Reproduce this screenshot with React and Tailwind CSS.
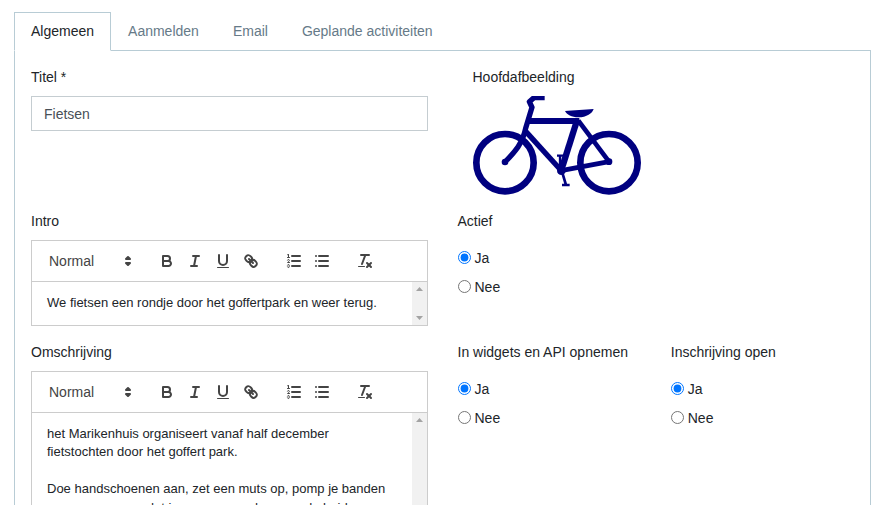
import React from "react";

const st = { stroke: "#444", strokeWidth: 2, strokeLinecap: "round", strokeLinejoin: "round", fill: "none" };
const thin = { ...st, strokeWidth: 1 };

const Btn = ({ children }) => (
  <div className="w-7 h-6 px-[5px] py-[3px]">
    <svg viewBox="0 0 18 18" className="block w-[18px] h-[18px]">{children}</svg>
  </div>
);

const Toolbar = () => (
  <div className="flex p-2 border-b border-[#ccc] h-[41px]">
    <div className="relative w-[98px] h-6 mr-[15px] pl-[9px] text-sm leading-6 text-[#444]">
      Normal
      <svg viewBox="0 0 18 18" className="absolute right-[1px] top-[3px] w-[18px] h-[18px]">
        <polygon points="7 11 9 13 11 11 7 11" {...st} strokeWidth="2" fill="#444" />
        <polygon points="7 7 9 5 11 7 7 7" {...st} strokeWidth="2" fill="#444" />
      </svg>
    </div>
    <div className="flex mr-[15px]">
      <Btn>
        <path d="M5,4H9.5A2.5,2.5,0,0,1,12,6.5v0A2.5,2.5,0,0,1,9.5,9H5A0,0,0,0,1,5,9V4A0,0,0,0,1,5,4Z" {...st} />
        <path d="M5,9h5.5A2.5,2.5,0,0,1,13,11.5v0A2.5,2.5,0,0,1,10.5,14H5a0,0,0,0,1,0,0V9A0,0,0,0,1,5,9Z" {...st} />
      </Btn>
      <Btn>
        <line x1="7" x2="13" y1="4" y2="4" {...st} />
        <line x1="5" x2="11" y1="14" y2="14" {...st} />
        <line x1="8" x2="10" y1="14" y2="4" {...st} />
      </Btn>
      <Btn>
        <path d="M5,3V9a4.012,4.012,0,0,0,4,4H9a4.012,4.012,0,0,0,4-4V3" {...st} />
        <rect x="3" y="15" width="12" height="1" rx="0.5" ry="0.5" fill="#444" />
      </Btn>
      <Btn>
        <line x1="7" x2="11" y1="7" y2="11" {...st} />
        <path d="M8.9,4.577a3.476,3.476,0,0,1,.36,4.679A3.476,3.476,0,0,1,4.577,8.9C3.185,7.5,2.035,6.4,4.217,4.217S7.5,3.185,8.9,4.577Z" {...st} />
        <path d="M13.423,9.1a3.476,3.476,0,0,0-4.679-.36,3.476,3.476,0,0,0,.36,4.679c1.392,1.392,2.5,2.542,4.679.36S14.815,10.5,13.423,9.1Z" {...st} />
      </Btn>
    </div>
    <div className="flex mr-[15px]">
      <Btn>
        <line x1="7" x2="15" y1="4" y2="4" {...st} />
        <line x1="7" x2="15" y1="9" y2="9" {...st} />
        <line x1="7" x2="15" y1="14" y2="14" {...st} />
        <line x1="2.5" x2="4.5" y1="5.5" y2="5.5" {...thin} />
        <path d="M3.5,6A0.5,0.5,0,0,1,3,5.5V3.085l-0.276.138A0.5,0.5,0,0,1,2.053,3c-0.124-.247-0.023-0.324.224-0.447l1-.5A0.5,0.5,0,0,1,4,2.5v3A0.5,0.5,0,0,1,3.5,6Z" fill="#444" />
        <path d="M4.5,10.5h-2c0-.234,1.85-1.076,1.85-2.234A0.959,0.959,0,0,0,2.5,8.156" {...thin} />
        <path d="M2.5,14.846a0.959,0.959,0,0,0,1.85-.109A0.7,0.7,0,0,0,3.75,14a0.688,0.688,0,0,0,.6-0.736,0.959,0.959,0,0,0-1.85-.109" {...thin} />
      </Btn>
      <Btn>
        <line x1="6" x2="15" y1="4" y2="4" {...st} />
        <line x1="6" x2="15" y1="9" y2="9" {...st} />
        <line x1="6" x2="15" y1="14" y2="14" {...st} />
        <line x1="3" x2="3" y1="4" y2="4" {...st} />
        <line x1="3" x2="3" y1="9" y2="9" {...st} />
        <line x1="3" x2="3" y1="14" y2="14" {...st} />
      </Btn>
    </div>
    <div className="flex">
      <Btn>
        <line x1="5" x2="13" y1="3" y2="3" {...st} />
        <line x1="6" x2="9.35" y1="12" y2="3" {...st} />
        <line x1="11" x2="15" y1="11" y2="15" {...st} />
        <line x1="15" x2="11" y1="11" y2="15" {...st} />
        <rect x="2" y="14" width="7" height="1" rx="0.5" ry="0.5" fill="#444" />
      </Btn>
    </div>
  </div>
);

const Scrollbar = ({ bottomArrow }) => (
  <div className="w-[15px] shrink-0 bg-[#f1f1f1] flex flex-col justify-between items-center py-[5px]">
    <svg viewBox="0 0 7 4" className="block w-[7px] h-1"><polygon points="0,4 3.5,0 7,4" fill="#a3a3a3" /></svg>
    {bottomArrow && <svg viewBox="0 0 7 4" className="block w-[7px] h-1"><polygon points="0,0 7,0 3.5,4" fill="#a3a3a3" /></svg>}
  </div>
);

const Field = ({ label, children }) => (
  <div>
    <div className="h-[21px] mb-2">{label}</div>
    {children}
  </div>
);

const Radios = ({ label }) => (
  <div>
    <div className="h-[21px] mb-4">{label}</div>
    <label className="flex items-center h-[21px] mb-2 gap-1">
      <input type="radio" defaultChecked name={label} className="m-0 -mt-[2px] w-[13px] h-[13px]" />
      Ja
    </label>
    <label className="flex items-center h-[21px] gap-1">
      <input type="radio" name={label} className="m-0 -mt-[2px] w-[13px] h-[13px]" />
      Nee
    </label>
  </div>
);

const Bike = () => (
  <svg viewBox="39 108 504 297" className="block w-[168px] h-[99px]" fill="none" stroke="#000080">
    <circle cx="135" cy="308" r="86" strokeWidth="20" />
    <circle cx="447" cy="308" r="86" strokeWidth="20" />
    <path d="M254 113H222L208 125L216 142L197 205C188 250 165 275 135 306" strokeWidth="16" strokeLinejoin="round" />
    <circle cx="135" cy="306" r="10" fill="#000080" stroke="none" />
    <path d="M205 183H358" strokeWidth="18" />
    <path d="M352 178L303 333" strokeWidth="19" />
    <path d="M195 212L305 333" strokeWidth="16" />
    <path d="M355 182L447 305" strokeWidth="14" />
    <path d="M303 332L447 305" strokeWidth="15" />
    <circle cx="447" cy="305" r="10" fill="#000080" stroke="none" />
    <circle cx="304" cy="332" r="13" fill="#000080" stroke="none" />
    <path d="M300 287V330M291 287H309" strokeWidth="7" />
    <path d="M306 335L318 375M306 375H329" strokeWidth="8" />
    <path d="M315 153C340 150 375 150 401 147C397 160 380 172 355 172C335 172 320 163 315 153Z" fill="#000080" stroke="none" />
  </svg>
);

export default function App() {
  return (
    <div className="h-[505px] overflow-hidden bg-white pt-3 px-[14px] pr-[22px] text-sm leading-[21px] text-[#212529] font-['Liberation_Sans',sans-serif]">
      <div className="flex relative z-10 -mb-px">
        <div className="px-4 py-2 border border-b-white border-[#b8ccd5] bg-white h-[39px]">Algemeen</div>
        <div className="px-[17px] py-[9px] text-[#667a88]">Aanmelden</div>
        <div className="px-[17px] py-[9px] text-[#667a88]">Email</div>
        <div className="px-[17px] py-[9px] text-[#667a88]">Geplande activiteiten</div>
      </div>
      <div className="border border-[#b8ccd5] px-4 pt-4 h-[600px]">
        <div className="grid grid-cols-2 gap-x-[30px] gap-y-4">
          <Field label="Titel *">
            <div className="h-[35px] border border-[#c5cdd1] px-3 leading-[35px] text-[#495057]">Fietsen</div>
          </Field>
          <div className="pl-[15px]">
            <Field label="Hoofdafbeelding"><Bike /></Field>
          </div>

          <Field label="Intro">
            <div className="border border-[#ccc]">
              <Toolbar />
              <div className="flex h-[43px] text-[13px] leading-[18.46px]">
                <div className="flex-1 pt-3 px-[15px]">We fietsen een rondje door het goffertpark en weer terug.</div>
                <Scrollbar bottomArrow />
              </div>
            </div>
          </Field>
          <Radios label="Actief" />

          <Field label="Omschrijving">
            <div className="border border-[#ccc]">
              <Toolbar />
              <div className="flex h-[300px] text-[13px] leading-[18.46px]">
                <div className="flex-1 pt-3 px-[15px]">
                  <p>het Marikenhuis organiseert vanaf half december fietstochten door het goffert park.</p>
                  <p className="mt-[18.46px]">Doe handschoenen aan, zet een muts op, pomp je banden eens even op en dat is een groene dag voor de heide.</p>
                </div>
                <Scrollbar />
              </div>
            </div>
          </Field>
          <div className="grid grid-cols-2 gap-x-[30px]">
            <Radios label="In widgets en API opnemen" />
            <Radios label="Inschrijving open" />
          </div>
        </div>
      </div>
    </div>
  );
}
